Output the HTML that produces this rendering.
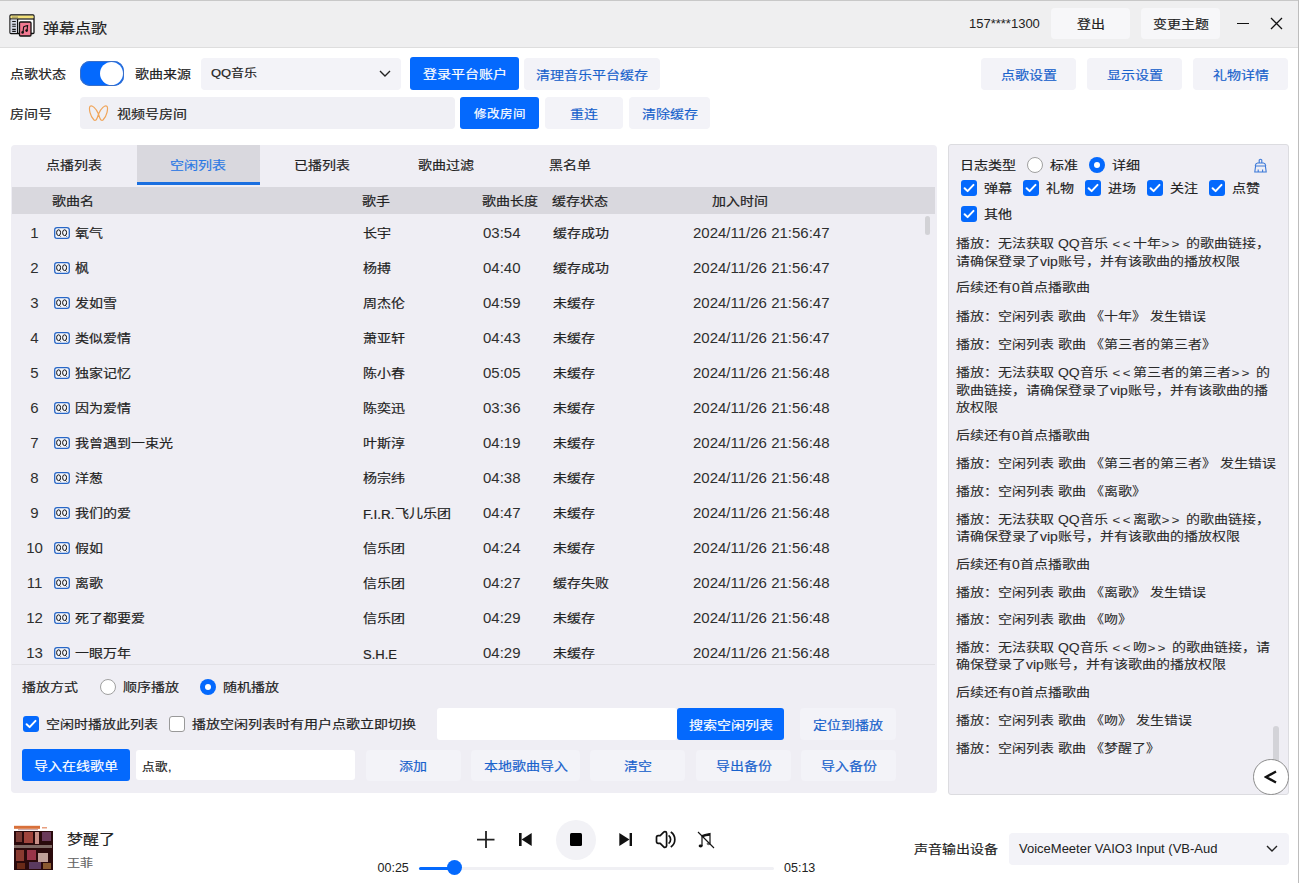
<!DOCTYPE html>
<html lang="zh-CN"><head><meta charset="utf-8">
<style>
*{margin:0;padding:0;box-sizing:border-box}
html,body{width:1299px;height:883px;overflow:hidden;background:#fff;font-family:"Liberation Sans",sans-serif;color:#222;font-size:14px;-webkit-text-stroke:0.2px currentColor}
.a{position:absolute}
.t{position:absolute;white-space:nowrap;line-height:20px}
.btn{position:absolute;background:#f3f3f8;color:#1862cc;border-radius:4px;text-align:center;font-size:14px}
.pbtn{position:absolute;background:#0469fd;color:#fff;border-radius:3px;text-align:center;font-size:14px}
.cb{position:absolute;width:16px;height:16px;border-radius:3px;background:#0469fd}
.cb svg{position:absolute;left:0;top:0}
.cbo{position:absolute;width:16px;height:16px;border-radius:3px;border:1px solid #999;background:#fff}
.rd{position:absolute;width:16px;height:16px;border-radius:50%;border:1px solid #a0a0a0;background:#fff}
.rdc{position:absolute;width:16px;height:16px;border-radius:50%;background:#0469fd}
.rdc::after{content:"";position:absolute;left:5px;top:5px;width:6px;height:6px;border-radius:50%;background:#fff}
.num{font-size:15px}
.num,.n{-webkit-text-stroke:0}
.num{color:#2e2e2e}
.lg{color:#2a2a2a;-webkit-text-stroke:0.1px currentColor}
.t:not(.num):not(.n){transform:translateY(1px) scaleY(.87)}
.btn span,.pbtn span{display:inline-block;transform:translateY(1.5px) scaleY(.87)}
.ang{letter-spacing:2.5px;margin-left:1px;font-size:13px}
.qq{position:absolute;width:16px;height:12px}
</style></head><body>
<svg width="0" height="0" style="position:absolute">
<defs>
<symbol id="chk" viewBox="0 0 16 16"><path d="M3.6 8.2 L6.6 11.1 L12.5 4.9" fill="none" stroke="#fff" stroke-width="2" stroke-linecap="round" stroke-linejoin="round"/></symbol>
<symbol id="qqi" viewBox="0 0 16 12"><rect x="0.7" y="0.7" width="14.6" height="10.6" rx="2.4" fill="#f4f6fb" stroke="#2766c6" stroke-width="1.3"/><ellipse cx="4.6" cy="5.7" rx="2.0" ry="2.9" fill="none" stroke="#111" stroke-width="1"/><path d="M5.4 8.3 L6.6 9.5" stroke="#111" stroke-width="1"/><ellipse cx="10.6" cy="5.7" rx="2.0" ry="2.9" fill="none" stroke="#111" stroke-width="1"/><path d="M11.4 8.3 L12.6 9.5" stroke="#111" stroke-width="1"/></symbol>
<symbol id="chev" viewBox="0 0 12 7"><path d="M1 1 L6 6 L11 1" fill="none" stroke="#222" stroke-width="1.4"/></symbol>
</defs></svg>
<!-- title bar -->
<div class="a" style="left:0;top:0;width:1299px;height:48px;background:#efeff0;border-bottom:1px solid #dedede"></div>
<div class="a" style="left:0;top:0;width:1299px;height:1px;background:#c8c8c8"></div>
<svg class="a" style="left:9px;top:14px" width="26" height="23" viewBox="0 0 26 23">
 <rect x="1" y="1" width="24" height="18.5" rx="1" fill="#fff" stroke="#111" stroke-width="1.3"/>
 <rect x="1.6" y="1.6" width="22.8" height="3" fill="#f3e27a"/>
 <line x1="1" y1="5" x2="25" y2="5" stroke="#111" stroke-width="1.2"/>
 <rect x="1.6" y="5.6" width="7" height="13.4" fill="#d4d8e4"/>
 <line x1="8.6" y1="5" x2="8.6" y2="19.5" stroke="#111" stroke-width="1.2"/>
 <path d="M3.2 7.5h3.6M3.2 10.3h3.6M3.2 12.3h3.6M3.2 15.4h3.6M3.2 17.4h3.6" stroke="#111" stroke-width="1.1"/>
 <rect x="10.5" y="8" width="11.5" height="14" rx="1" fill="#f27a92" stroke="#111" stroke-width="1.3"/>
 <path d="M14 18.5 L14.6 13 Q16.5 11.6 18.6 11.6 L18 16.8" fill="none" stroke="#111" stroke-width="1.1"/>
 <circle cx="13.6" cy="18.4" r="1.3" fill="#111"/><circle cx="17.6" cy="16.6" r="1.3" fill="#111"/>
 <circle cx="4" cy="3.1" r="0.6" fill="#333"/><circle cx="6" cy="3.1" r="0.6" fill="#333"/><circle cx="8" cy="3.1" r="0.6" fill="#333"/>
</svg>
<div class="t" style="left:43px;top:17.5px;font-size:16px;color:#222">弹幕点歌</div>
<div class="t n" style="left:969px;top:14px;font-size:13px;color:#222">157****1300</div>
<div class="btn" style="left:1051px;top:8px;width:79px;height:31px;line-height:31px;color:#222;background:#f7f7f9"><span>登出</span></div>
<div class="btn" style="left:1141px;top:8px;width:79px;height:31px;line-height:31px;color:#222;background:#f7f7f9"><span>变更主题</span></div>
<div class="a" style="left:1237px;top:22.5px;width:11.5px;height:1.5px;background:#111"></div>
<svg class="a" style="left:1270px;top:17px" width="13" height="13" viewBox="0 0 13 13"><path d="M1 1 L12 12 M12 1 L1 12" stroke="#111" stroke-width="1.3"/></svg>
<div class="a" style="left:1298px;top:0;width:1px;height:883px;background:#bdbdbd"></div>

<!-- row1 -->
<div class="t" style="left:10px;top:64px">点歌状态</div>
<div class="a" style="left:80px;top:60.5px;width:44px;height:25.5px;border-radius:10px;background:#0469fd;box-shadow:inset 0 0 0 1px #3a6fc8"></div>
<div class="a" style="left:99.7px;top:61.6px;width:23.4px;height:23.4px;border-radius:50%;background:#fff"></div>
<div class="t" style="left:135px;top:64px">歌曲来源</div>
<div class="a" style="left:201px;top:58px;width:200px;height:32px;background:#f3f3f8;border-radius:4px"></div>
<div class="t" style="left:211px;top:63px;font-size:13px">QQ音乐</div>
<svg class="a" style="left:379px;top:70px" width="12" height="7"><use href="#chev"/></svg>
<div class="pbtn" style="left:410px;top:57px;width:109px;height:33px;line-height:33px"><span>登录平台账户</span></div>
<div class="btn" style="left:524px;top:58px;width:136px;height:32px;line-height:32px"><span>清理音乐平台缓存</span></div>
<div class="btn" style="left:981px;top:58px;width:95px;height:32px;line-height:32px"><span>点歌设置</span></div>
<div class="btn" style="left:1087px;top:58px;width:95px;height:32px;line-height:32px"><span>显示设置</span></div>
<div class="btn" style="left:1193px;top:58px;width:95px;height:32px;line-height:32px"><span>礼物详情</span></div>

<!-- row2 -->
<div class="t" style="left:10px;top:104px">房间号</div>
<div class="a" style="left:80px;top:97px;width:375px;height:32px;background:#f0f0f5;border-radius:4px"></div>
<svg class="a" style="left:88px;top:104px" width="21" height="18" viewBox="0 0 21 18"><path d="M10.5 10 C8 4 4 1 2.2 2.2 C0.5 4 2 12 6 16 C8 17.5 9.5 14 10.5 10 C11.5 14 13 17.5 15 16 C19 12 20.5 4 18.8 2.2 C17 1 13 4 10.5 10 Z" fill="none" stroke="#f0a55a" stroke-width="1.2"/></svg>
<div class="t" style="left:117px;top:104px">视频号房间</div>
<div class="pbtn" style="left:460px;top:97px;width:79px;height:32px;line-height:32px;font-size:12.5px"><span>修改房间</span></div>
<div class="btn" style="left:545px;top:97px;width:78px;height:32px;line-height:32px"><span>重连</span></div>
<div class="btn" style="left:629px;top:97px;width:81px;height:32px;line-height:32px"><span>清除缓存</span></div>

<!-- left panel -->
<div class="a" style="left:11px;top:145px;width:926px;height:648px;background:#efeef4;border-radius:4px"></div>
<div class="a" style="left:137px;top:145px;width:123px;height:40px;background:#d9d8de"></div>
<div class="a" style="left:137px;top:182px;width:123px;height:3px;background:#1a6fe0"></div>
<div class="t" style="left:46px;top:155px">点播列表</div>
<div class="t" style="left:170px;top:155px;color:#2a78e4">空闲列表</div>
<div class="t" style="left:294px;top:155px">已播列表</div>
<div class="t" style="left:418px;top:155px">歌曲过滤</div>
<div class="t" style="left:549px;top:155px">黑名单</div>
<div class="a" style="left:12px;top:187px;width:923px;height:27px;background:#d9d8de"></div>
<div class="t" style="left:52px;top:191px">歌曲名</div>
<div class="t" style="left:362px;top:191px">歌手</div>
<div class="t" style="left:482px;top:191px">歌曲长度</div>
<div class="t" style="left:552px;top:191px">缓存状态</div>
<div class="t" style="left:712px;top:191px">加入时间</div>
<div id="rows"><div class="a" style="left:12px;top:215px;width:912px;height:449px;overflow:hidden">
<div class="a" style="left:0;top:0px;width:912px;height:35px">
<div class="t num" style="left:2px;width:41px;top:8px;text-align:center">1</div>
<svg class="qq" style="left:42px;top:12px" width="16" height="12"><use href="#qqi"/></svg>
<div class="t" style="left:63px;top:8px">氧气</div>
<div class="t" style="left:351px;top:8px">长宇</div>
<div class="t num" style="left:471px;top:8px">03:54</div>
<div class="t" style="left:541px;top:8px">缓存成功</div>
<div class="t num" style="left:681px;top:8px">2024/11/26 21:56:47</div>
</div>
<div class="a" style="left:0;top:35px;width:912px;height:35px">
<div class="t num" style="left:2px;width:41px;top:8px;text-align:center">2</div>
<svg class="qq" style="left:42px;top:12px" width="16" height="12"><use href="#qqi"/></svg>
<div class="t" style="left:63px;top:8px">枫</div>
<div class="t" style="left:351px;top:8px">杨搏</div>
<div class="t num" style="left:471px;top:8px">04:40</div>
<div class="t" style="left:541px;top:8px">缓存成功</div>
<div class="t num" style="left:681px;top:8px">2024/11/26 21:56:47</div>
</div>
<div class="a" style="left:0;top:70px;width:912px;height:35px">
<div class="t num" style="left:2px;width:41px;top:8px;text-align:center">3</div>
<svg class="qq" style="left:42px;top:12px" width="16" height="12"><use href="#qqi"/></svg>
<div class="t" style="left:63px;top:8px">发如雪</div>
<div class="t" style="left:351px;top:8px">周杰伦</div>
<div class="t num" style="left:471px;top:8px">04:59</div>
<div class="t" style="left:541px;top:8px">未缓存</div>
<div class="t num" style="left:681px;top:8px">2024/11/26 21:56:47</div>
</div>
<div class="a" style="left:0;top:105px;width:912px;height:35px">
<div class="t num" style="left:2px;width:41px;top:8px;text-align:center">4</div>
<svg class="qq" style="left:42px;top:12px" width="16" height="12"><use href="#qqi"/></svg>
<div class="t" style="left:63px;top:8px">类似爱情</div>
<div class="t" style="left:351px;top:8px">萧亚轩</div>
<div class="t num" style="left:471px;top:8px">04:43</div>
<div class="t" style="left:541px;top:8px">未缓存</div>
<div class="t num" style="left:681px;top:8px">2024/11/26 21:56:47</div>
</div>
<div class="a" style="left:0;top:140px;width:912px;height:35px">
<div class="t num" style="left:2px;width:41px;top:8px;text-align:center">5</div>
<svg class="qq" style="left:42px;top:12px" width="16" height="12"><use href="#qqi"/></svg>
<div class="t" style="left:63px;top:8px">独家记忆</div>
<div class="t" style="left:351px;top:8px">陈小春</div>
<div class="t num" style="left:471px;top:8px">05:05</div>
<div class="t" style="left:541px;top:8px">未缓存</div>
<div class="t num" style="left:681px;top:8px">2024/11/26 21:56:48</div>
</div>
<div class="a" style="left:0;top:175px;width:912px;height:35px">
<div class="t num" style="left:2px;width:41px;top:8px;text-align:center">6</div>
<svg class="qq" style="left:42px;top:12px" width="16" height="12"><use href="#qqi"/></svg>
<div class="t" style="left:63px;top:8px">因为爱情</div>
<div class="t" style="left:351px;top:8px">陈奕迅</div>
<div class="t num" style="left:471px;top:8px">03:36</div>
<div class="t" style="left:541px;top:8px">未缓存</div>
<div class="t num" style="left:681px;top:8px">2024/11/26 21:56:48</div>
</div>
<div class="a" style="left:0;top:210px;width:912px;height:35px">
<div class="t num" style="left:2px;width:41px;top:8px;text-align:center">7</div>
<svg class="qq" style="left:42px;top:12px" width="16" height="12"><use href="#qqi"/></svg>
<div class="t" style="left:63px;top:8px">我曾遇到一束光</div>
<div class="t" style="left:351px;top:8px">叶斯淳</div>
<div class="t num" style="left:471px;top:8px">04:19</div>
<div class="t" style="left:541px;top:8px">未缓存</div>
<div class="t num" style="left:681px;top:8px">2024/11/26 21:56:48</div>
</div>
<div class="a" style="left:0;top:245px;width:912px;height:35px">
<div class="t num" style="left:2px;width:41px;top:8px;text-align:center">8</div>
<svg class="qq" style="left:42px;top:12px" width="16" height="12"><use href="#qqi"/></svg>
<div class="t" style="left:63px;top:8px">洋葱</div>
<div class="t" style="left:351px;top:8px">杨宗纬</div>
<div class="t num" style="left:471px;top:8px">04:38</div>
<div class="t" style="left:541px;top:8px">未缓存</div>
<div class="t num" style="left:681px;top:8px">2024/11/26 21:56:48</div>
</div>
<div class="a" style="left:0;top:280px;width:912px;height:35px">
<div class="t num" style="left:2px;width:41px;top:8px;text-align:center">9</div>
<svg class="qq" style="left:42px;top:12px" width="16" height="12"><use href="#qqi"/></svg>
<div class="t" style="left:63px;top:8px">我们的爱</div>
<div class="t" style="left:351px;top:8px"><span style='font-size:13.5px;display:inline-block;transform:scaleY(1.12)'>F.I.R.</span>飞儿乐团</div>
<div class="t num" style="left:471px;top:8px">04:47</div>
<div class="t" style="left:541px;top:8px">未缓存</div>
<div class="t num" style="left:681px;top:8px">2024/11/26 21:56:48</div>
</div>
<div class="a" style="left:0;top:315px;width:912px;height:35px">
<div class="t num" style="left:2px;width:41px;top:8px;text-align:center">10</div>
<svg class="qq" style="left:42px;top:12px" width="16" height="12"><use href="#qqi"/></svg>
<div class="t" style="left:63px;top:8px">假如</div>
<div class="t" style="left:351px;top:8px">信乐团</div>
<div class="t num" style="left:471px;top:8px">04:24</div>
<div class="t" style="left:541px;top:8px">未缓存</div>
<div class="t num" style="left:681px;top:8px">2024/11/26 21:56:48</div>
</div>
<div class="a" style="left:0;top:350px;width:912px;height:35px">
<div class="t num" style="left:2px;width:41px;top:8px;text-align:center">11</div>
<svg class="qq" style="left:42px;top:12px" width="16" height="12"><use href="#qqi"/></svg>
<div class="t" style="left:63px;top:8px">离歌</div>
<div class="t" style="left:351px;top:8px">信乐团</div>
<div class="t num" style="left:471px;top:8px">04:27</div>
<div class="t" style="left:541px;top:8px">缓存失败</div>
<div class="t num" style="left:681px;top:8px">2024/11/26 21:56:48</div>
</div>
<div class="a" style="left:0;top:385px;width:912px;height:35px">
<div class="t num" style="left:2px;width:41px;top:8px;text-align:center">12</div>
<svg class="qq" style="left:42px;top:12px" width="16" height="12"><use href="#qqi"/></svg>
<div class="t" style="left:63px;top:8px">死了都要爱</div>
<div class="t" style="left:351px;top:8px">信乐团</div>
<div class="t num" style="left:471px;top:8px">04:29</div>
<div class="t" style="left:541px;top:8px">未缓存</div>
<div class="t num" style="left:681px;top:8px">2024/11/26 21:56:48</div>
</div>
<div class="a" style="left:0;top:420px;width:912px;height:35px">
<div class="t num" style="left:2px;width:41px;top:8px;text-align:center">13</div>
<svg class="qq" style="left:42px;top:12px" width="16" height="12"><use href="#qqi"/></svg>
<div class="t" style="left:63px;top:8px">一眼万年</div>
<div class="t" style="left:351px;top:8px"><span style='font-size:13px;display:inline-block;transform:scaleY(1.12)'>S.H.E</span></div>
<div class="t num" style="left:471px;top:8px">04:29</div>
<div class="t" style="left:541px;top:8px">未缓存</div>
<div class="t num" style="left:681px;top:8px">2024/11/26 21:56:48</div>
</div>
</div></div><!--/rows-->
<div class="a" style="left:12px;top:664px;width:923px;height:1px;background:#e2e1e6"></div>
<div class="a" style="left:925px;top:216px;width:5px;height:19px;border-radius:3px;background:#d2d2d6"></div>

<div class="t" style="left:22px;top:677px">播放方式</div>
<div class="rd" style="left:100px;top:679px"></div>
<div class="t" style="left:123px;top:677px">顺序播放</div>
<div class="rdc" style="left:200px;top:679px"></div>
<div class="t" style="left:223px;top:677px">随机播放</div>

<div class="cb" style="left:23px;top:716px"><svg width="16" height="16"><use href="#chk"/></svg></div>
<div class="t" style="left:46px;top:714px">空闲时播放此列表</div>
<div class="cbo" style="left:169px;top:716px"></div>
<div class="t" style="left:192px;top:714px">播放空闲列表时有用户点歌立即切换</div>
<div class="a" style="left:437px;top:708px;width:240px;height:32px;background:#fff;border-radius:3px"></div>
<div class="pbtn" style="left:677px;top:708px;width:107px;height:32px;line-height:32px"><span>搜索空闲列表</span></div>
<div class="btn" style="left:800px;top:708px;width:96px;height:32px;line-height:32px"><span>定位到播放</span></div>

<div class="pbtn" style="left:22px;top:749px;width:108px;height:32px;line-height:33px"><span>导入在线歌单</span></div>
<div class="a" style="left:136px;top:750px;width:219px;height:30px;background:#fff;border-radius:3px"></div>
<div class="t" style="left:142px;top:757px;font-size:12.5px">点歌,</div>
<div class="btn" style="left:365.5px;top:750px;width:95.5px;height:31px;line-height:31px"><span>添加</span></div>
<div class="btn" style="left:471px;top:750px;width:109px;height:31px;line-height:31px"><span>本地歌曲导入</span></div>
<div class="btn" style="left:590px;top:750px;width:95px;height:31px;line-height:31px"><span>清空</span></div>
<div class="btn" style="left:696px;top:750px;width:95px;height:31px;line-height:31px"><span>导出备份</span></div>
<div class="btn" style="left:801px;top:750px;width:95px;height:31px;line-height:31px"><span>导入备份</span></div>

<!-- right panel -->
<div class="a" style="left:948px;top:144px;width:341px;height:651px;background:#efeef4;border:1px solid #dcdce0;border-radius:3px"></div>
<div class="t" style="left:960px;top:155px">日志类型</div>
<div class="rd" style="left:1027px;top:157px"></div>
<div class="t" style="left:1050px;top:155px">标准</div>
<div class="rdc" style="left:1089px;top:157px"></div>
<div class="t" style="left:1112px;top:155px">详细</div>
<svg class="a" style="left:1254px;top:158px" width="13" height="15" viewBox="0 0 13 15"><path d="M5.2 5 V2 Q6.5 0.6 7.8 2 V5 M1.2 7.8 Q1.6 5.2 3.5 5 H9.5 Q11.4 5.2 11.8 7.8 M1 8 H12 M1.6 8 L0.8 14 H12.2 L11.4 8 M4.2 14 V11.6 M8.6 14 V11.6" fill="none" stroke="#3b78d8" stroke-width="1.1"/></svg>
<div class="cb" style="left:961px;top:180px"><svg width="16" height="16"><use href="#chk"/></svg></div>
<div class="t" style="left:984px;top:178px">弹幕</div>
<div class="cb" style="left:1023px;top:180px"><svg width="16" height="16"><use href="#chk"/></svg></div>
<div class="t" style="left:1046px;top:178px">礼物</div>
<div class="cb" style="left:1085px;top:180px"><svg width="16" height="16"><use href="#chk"/></svg></div>
<div class="t" style="left:1108px;top:178px">进场</div>
<div class="cb" style="left:1147px;top:180px"><svg width="16" height="16"><use href="#chk"/></svg></div>
<div class="t" style="left:1170px;top:178px">关注</div>
<div class="cb" style="left:1209px;top:180px"><svg width="16" height="16"><use href="#chk"/></svg></div>
<div class="t" style="left:1232px;top:178px">点赞</div>
<div class="cb" style="left:961px;top:206px"><svg width="16" height="16"><use href="#chk"/></svg></div>
<div class="t" style="left:984px;top:204px">其他</div>
<div id="logs"><div class="t lg" style="left:956px;top:233px">播放：无法获取 QQ音乐 <span class=ang>&lt;&lt;</span>十年<span class=ang>&gt;&gt;</span> 的歌曲链接，</div>
<div class="t lg" style="left:956px;top:251px">请确保登录了vip账号，并有该歌曲的播放权限</div>
<div class="t lg" style="left:956px;top:277px">后续还有0首点播歌曲</div>
<div class="t lg" style="left:956px;top:306px">播放：空闲列表 歌曲 《十年》 发生错误</div>
<div class="t lg" style="left:956px;top:334px">播放：空闲列表 歌曲 《第三者的第三者》</div>
<div class="t lg" style="left:956px;top:362px">播放：无法获取 QQ音乐 <span class=ang>&lt;&lt;</span>第三者的第三者<span class=ang>&gt;&gt;</span> 的</div>
<div class="t lg" style="left:956px;top:380px">歌曲链接，请确保登录了vip账号，并有该歌曲的播</div>
<div class="t lg" style="left:956px;top:397px">放权限</div>
<div class="t lg" style="left:956px;top:425px">后续还有0首点播歌曲</div>
<div class="t lg" style="left:956px;top:453px">播放：空闲列表 歌曲 《第三者的第三者》 发生错误</div>
<div class="t lg" style="left:956px;top:481px">播放：空闲列表 歌曲 《离歌》</div>
<div class="t lg" style="left:956px;top:509px">播放：无法获取 QQ音乐 <span class=ang>&lt;&lt;</span>离歌<span class=ang>&gt;&gt;</span> 的歌曲链接，</div>
<div class="t lg" style="left:956px;top:526px">请确保登录了vip账号，并有该歌曲的播放权限</div>
<div class="t lg" style="left:956px;top:554px">后续还有0首点播歌曲</div>
<div class="t lg" style="left:956px;top:582px">播放：空闲列表 歌曲 《离歌》 发生错误</div>
<div class="t lg" style="left:956px;top:609px">播放：空闲列表 歌曲 《吻》</div>
<div class="t lg" style="left:956px;top:637px">播放：无法获取 QQ音乐 <span class=ang>&lt;&lt;</span>吻<span class=ang>&gt;&gt;</span> 的歌曲链接，请</div>
<div class="t lg" style="left:956px;top:654px">确保登录了vip账号，并有该歌曲的播放权限</div>
<div class="t lg" style="left:956px;top:682px">后续还有0首点播歌曲</div>
<div class="t lg" style="left:956px;top:710px">播放：空闲列表 歌曲 《吻》 发生错误</div>
<div class="t lg" style="left:956px;top:738px">播放：空闲列表 歌曲 《梦醒了》</div></div><!--/logs-->
<div class="a" style="left:1273px;top:726px;width:6px;height:40px;border-radius:3px;background:#d3d3d8"></div>
<div class="a" style="left:1253px;top:759px;width:35.5px;height:35.5px;border-radius:50%;background:#fff;border:1px solid #8c8c8c"></div>
<svg class="a" style="left:1264px;top:770px" width="14" height="14" viewBox="0 0 14 14"><path d="M12 1.5 L2.2 7 L12 12.5" fill="none" stroke="#111" stroke-width="2.4"/></svg>

<!-- bottom -->
<svg class="a" style="left:13px;top:825px" width="41" height="46" viewBox="0 0 41 46">
 <rect x="0" y="0" width="41" height="46" fill="#fff"/>
 <rect x="1" y="0.8" width="26" height="3" fill="#d8703a"/>
 <rect x="29" y="2" width="5" height="1.5" fill="#e8a080"/>
 <rect x="5" y="4" width="20" height="1.2" fill="#caa"/>
 <rect x="1" y="6" width="39" height="39" fill="#2a0a0c"/>
 <rect x="3" y="7" width="6" height="10" fill="#7a3a34"/>
 <rect x="11" y="7" width="9" height="11" fill="#a0443c"/>
 <rect x="22" y="7" width="4" height="12" fill="#c89088"/>
 <rect x="29" y="7" width="9" height="9" fill="#6a3a5a"/>
 <rect x="1" y="20" width="38" height="3" fill="#b8a8a0" opacity="0.6"/>
 <rect x="3" y="25" width="8" height="11" fill="#8a3a30"/>
 <rect x="14" y="25" width="9" height="10" fill="#983448"/>
 <rect x="25" y="28" width="10" height="9" fill="#c0a098"/>
 <rect x="4" y="38" width="8" height="6" fill="#6a2a18"/>
 <rect x="16" y="37" width="12" height="7" fill="#5a3a60"/>
 <rect x="30" y="38" width="8" height="6" fill="#8a5a30"/>
</svg>
<div class="t" style="left:67px;top:829px;font-size:16px">梦醒了</div>
<div class="t" style="left:67px;top:853px;font-size:13px;color:#666">王菲</div>
<svg class="a" style="left:477px;top:831px" width="18" height="18" viewBox="0 0 18 18"><path d="M9 0 V17 M0 8.6 H17.5" stroke="#222" stroke-width="1.8"/></svg>
<svg class="a" style="left:518px;top:832px" width="15" height="15" viewBox="0 0 15 15"><rect x="1" y="1" width="2.6" height="13" fill="#111"/><path d="M3.6 7.5 L13.7 1 V14 Z" fill="#111"/></svg>
<div class="a" style="left:556px;top:820px;width:40px;height:40px;border-radius:50%;background:#f2f2f6"></div>
<div class="a" style="left:570px;top:833px;width:12px;height:13px;background:#000;border-radius:1.5px"></div>
<svg class="a" style="left:618px;top:832px" width="15" height="15" viewBox="0 0 15 15"><path d="M1.3 1 L11.5 7.5 L1.3 14 Z" fill="#111"/><rect x="11.6" y="1" width="2.4" height="13" fill="#111"/></svg>
<svg class="a" style="left:655px;top:830px" width="23" height="19" viewBox="0 0 23 19"><path d="M10 1.6 Q11.6 1.6 11.6 3.2 V15.8 Q11.6 17.4 10 17.4 Q9.3 17.4 8.7 16.8 L5.2 13.3 H3.2 Q1.5 13.3 1.5 11.6 V7.4 Q1.5 5.7 3.2 5.7 H5.2 L8.7 2.2 Q9.3 1.6 10 1.6 Z" fill="none" stroke="#111" stroke-width="1.7" stroke-linejoin="round"/><path d="M13.6 5.4 A5.2 5.2 0 0 1 13.6 13.6" fill="none" stroke="#111" stroke-width="1.7"/><path d="M15.8 2 A9 9 0 0 1 15.8 17" fill="none" stroke="#111" stroke-width="1.7"/></svg>
<svg class="a" style="left:697px;top:831px" width="18" height="18" viewBox="0 0 18 18"><path d="M5 15 V4.5 Q9 3 13 2.5 V12.5" fill="none" stroke="#111" stroke-width="1.2"/><path d="M5 4.5 Q9 3 13 2.5 V4.8 Q9 5 5 6.6 Z" fill="#111"/><ellipse cx="3.6" cy="15" rx="2" ry="1.4" fill="#111"/><ellipse cx="11.6" cy="12.8" rx="2" ry="1.4" fill="#111" opacity="0.6"/><path d="M1 1 L17 17" stroke="#111" stroke-width="1.1"/></svg>
<div class="t n" style="left:377.5px;top:858px;font-size:12.5px">00:25</div>
<div class="t n" style="left:784px;top:858px;font-size:12.5px">05:13</div>
<div class="a" style="left:419px;top:866.5px;width:355px;height:3px;border-radius:1.5px;background:#f0f0f4"></div>
<div class="a" style="left:419px;top:866.5px;width:35px;height:3px;border-radius:1.5px;background:#0469fd"></div>
<div class="a" style="left:446.5px;top:860.2px;width:15px;height:15px;border-radius:50%;background:#0469fd"></div>
<div class="t" style="left:914px;top:839px">声音输出设备</div>
<div class="a" style="left:1009px;top:833px;width:280px;height:32px;background:#f3f3f8;border-radius:4px"></div>
<div class="t n" style="left:1019px;top:839px;font-size:13px">VoiceMeeter VAIO3 Input (VB-Aud</div>
<svg class="a" style="left:1266px;top:845px" width="12" height="7"><use href="#chev"/></svg>
</body></html>
